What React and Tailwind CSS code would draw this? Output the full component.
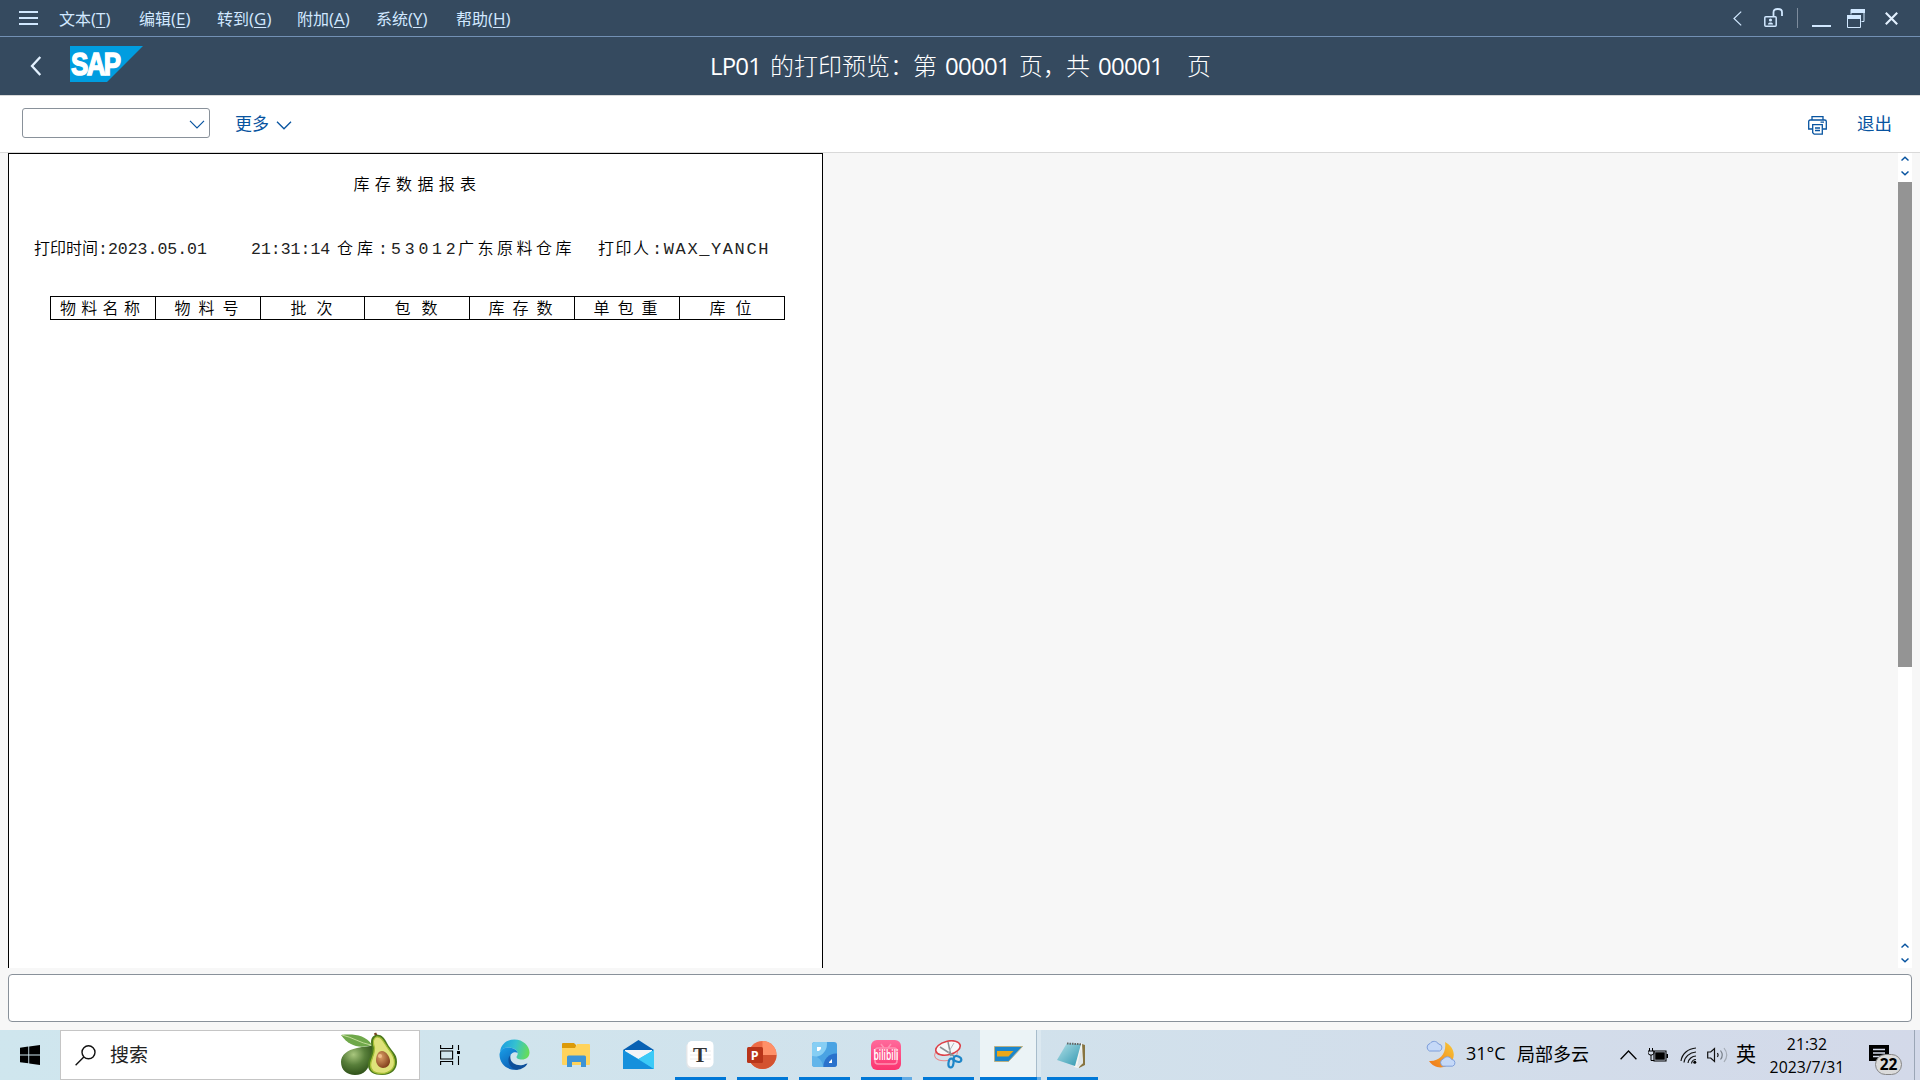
import React from "react";

const MENU = [
  ["文本", "T", "w-[80px]"],
  ["编辑", "E", "w-[78px]"],
  ["转到", "G", "w-[80px]"],
  ["附加", "A", "w-[79px]"],
  ["系统", "Y", "w-[80px]"],
  ["帮助", "H", "w-[80px]"],
];

const COLUMNS = [
  ["物料名称", "w-[105px] pl-[9px] tracking-[5.3px]"],
  ["物料号", "w-[105px] pl-[18.5px] tracking-[8px]"],
  ["批次", "w-[104px] pl-[29.5px] tracking-[10px]"],
  ["包数", "w-[105px] pl-[29.5px] tracking-[11px]"],
  ["库存数", "w-[105px] pl-[18.5px] tracking-[8px]"],
  ["单包重", "w-[105px] pl-[18.5px] tracking-[8px]"],
  ["库位", "w-[105px] pl-[29.5px] tracking-[10px]"],
];

const CJK = "font-['Noto_Sans_CJK_SC',sans-serif]";
const UI = "font-['Open_Sans','Noto_Sans_CJK_SC',sans-serif]";
const MONO = "font-['Liberation_Mono','Noto_Sans_CJK_SC',monospace]";

function MenuBar() {
  return (
    <div className="flex h-[37px] shrink-0 items-center border-b border-[#7290b4] text-[#d1e8ff]">
      <svg className="ml-[19px] shrink-0" width="19" height="14" viewBox="0 0 19 14" fill="currentColor">
        <rect y="0" width="19" height="2" />
        <rect y="6" width="19" height="2" />
        <rect y="12" width="19" height="2" />
      </svg>
      <div className="ml-[21px] flex text-[16px] leading-[20px]">
        {MENU.map(([name, key, w]) => (
          <span key={key} className={`${w} whitespace-nowrap pt-[1px]`}>
            {name}<span className="text-[17px]">(<span className="underline underline-offset-2">{key}</span>)</span>
          </span>
        ))}
      </div>
      <div className="ml-auto flex items-center">
        <svg width="9" height="15" viewBox="0 0 9 15" fill="none" stroke="currentColor" strokeWidth="1.2">
          <path d="M8.2.6 1 7.5l7.2 6.9" />
        </svg>
        <svg className="ml-[22px]" width="20" height="20" viewBox="0 0 20 20" fill="none" stroke="currentColor">
          <rect x=".8" y="8.8" width="11.4" height="9.4" rx="1" strokeWidth="1.5" />
          <path d="M9.5 8V4.2C9.5 2 11 1 13.7 1S18 2 18 4.2V8" strokeWidth="1.8" />
          <circle cx="6.5" cy="12" r="1.6" fill="currentColor" stroke="none" />
          <path d="M4 16.4c0-1.500 1-2 2.500-2s2.500.5 2.500 2z" fill="currentColor" stroke="none" />
        </svg>
        <div className="ml-[13px] h-5 w-px bg-[#7d8c9d]" />
        <div className="ml-[14px] mt-[16px] h-[2px] w-[19px] bg-[#d1e8ff]" />
        <svg className="ml-4" width="18" height="19" viewBox="0 0 18 19" fill="none" stroke="currentColor">
          <path d="M4 5.500V.5h13v12h-2.500" strokeWidth="1" />
          <path d="M4 0h14v4H4zM0 6h14v4H0z" fill="currentColor" stroke="none" />
          <path d="M.5 7v11.500h13V7" strokeWidth="1" />
        </svg>
        <svg className="ml-5 mr-[22px]" width="13" height="13" viewBox="0 0 13 13" fill="none" stroke="#e3f1ff" strokeWidth="2.1">
          <path d="M.8.8l11.400 11.400M12.200.8.800 12.200" />
        </svg>
      </div>
    </div>
  );
}

function TitleBar() {
  return (
    <div className="flex h-[58px] shrink-0 items-center text-white">
      <svg className="ml-[30px] shrink-0" width="12" height="20" viewBox="0 0 12 20" fill="none" stroke="#e3f1ff" strokeWidth="2.300">
        <path d="M10.300 1 2 10l8.300 9" />
      </svg>
      <svg className="-mt-[4px] ml-[28px] shrink-0" width="73" height="36" viewBox="0 0 73 36">
        <path d="M0 0h73L37 36H0z" fill="#009de0" />
        <text x="1" y="28.500" textLength="48.500" lengthAdjust="spacingAndGlyphs" fontFamily="Liberation Sans" fontWeight="700" fontSize="32" letterSpacing="-2" fill="#fff" stroke="#fff" strokeWidth="1.500">SAP</text>
      </svg>
      <div className="-mt-px ml-[567px] flex whitespace-pre text-[24px] font-light leading-[30px]">
        <span className="w-[60px] font-normal tracking-[-0.800px]">LP01</span>
        <span className="w-[143px]">的打印预览：</span>
        <span className="w-[32px]">第</span>
        <span className="w-[74px] font-normal tracking-[-0.700px]">00001</span>
        <span className="w-[47px]">页，</span>
        <span className="w-[32px]">共</span>
        <span className="w-[89px] font-normal tracking-[-0.700px]">00001</span>
        <span>页</span>
      </div>
    </div>
  );
}

function Toolbar() {
  return (
    <div className="flex h-[58px] shrink-0 items-center border-y border-[#d9d9d9] bg-white text-[#0854a0]">
      <div className="-mt-[2px] ml-[22px] flex h-[30px] w-[188px] shrink-0 items-center justify-end rounded-[3px] border border-[#89919a] bg-white pr-[4px]">
        <svg className="mt-[2px]" width="16" height="9" viewBox="0 0 16 9" fill="none" stroke="currentColor" strokeWidth="1.200">
          <path d="M1 .8l7 7 7-7" />
        </svg>
      </div>
      <span className={`${CJK} -mt-[3px] ml-[25px] w-[41px] text-[17px]`}>更多</span>
      <svg width="16" height="9" viewBox="0 0 16 9" className="mt-[3px]" fill="none" stroke="currentColor" strokeWidth="1.300">
        <path d="M1 .8l7 7 7-7" />
      </svg>
      <svg className="ml-auto mt-[2px]" width="19" height="19" viewBox="0 0 19 19" fill="none" stroke="currentColor" strokeWidth="1.300">
        <path d="M4 4V.7h11V4M4 13H.7V5.500Q.7 4 2.200 4h14.600q1.500 0 1.500 1.500V13H15" />
        <path d="M4.700 8.700h9.600v9.500H6.200l-1.500-1.500zM7 12h5M7 14.500h5M12.500 6.200h3.500" />
      </svg>
      <span className={`${CJK} -mt-px ml-[30px] mr-[28px] text-[17.500px]`}>退出</span>
    </div>
  );
}

function Arrows() {
  return (
    <svg className="mx-auto block" width="8" height="20" viewBox="0 0 8 20" fill="none" stroke="#0854a0" strokeWidth="1.500">
      <path d="M.5 4.500 4 1.200l3.500 3.300M.5 15.500 4 18.800l3.500-3.300" />
    </svg>
  );
}

function Report() {
  return (
    <div className={`${MONO} ml-2 h-[815px] w-[815px] border-x border-t border-black bg-white text-[16px] font-[350] text-black`}>
      <div className="mt-[20px] pl-[344.5px] leading-[24px] tracking-[5.300px]">库存数据报表</div>
      <div className="mt-[40px] flex whitespace-pre pl-[25px] leading-[24px]">
        <span className="w-[64px]">打印时间</span>
        <span className="w-[153px] text-[16.500px] font-normal text-[#222]">:2023.05.01</span>
        <span className="w-[86px] text-[16.500px] font-normal text-[#222]">21:31:14</span>
        <span className="w-[41px] tracking-[4px]">仓库</span>
        <span className="w-[13px] text-[16.500px] font-normal text-[#222]">:</span>
        <span className="w-[67px] text-[16.500px] font-normal tracking-[3.800px] text-[#222]">53012</span>
        <span className="w-[140px] tracking-[3.500px]">广东原料仓库</span>
        <span className="w-[54px] tracking-[1.500px]">打印人</span>
        <span className="text-[17px] font-normal tracking-[1.600px] text-[#222]">:WAX_YANCH</span>
      </div>
      <div className="ml-[41px] mt-[34px] flex h-[24px] w-[735px] border-l border-black">
        {COLUMNS.map(([label, cls]) => (
          <div key={label} className={`${cls} shrink-0 whitespace-nowrap border-y border-r border-black leading-[26px]`}>
            {label}
          </div>
        ))}
      </div>
    </div>
  );
}

function Avocado() {
  return (
    <svg width="58" height="44" viewBox="0 0 58 44">
      <defs>
        <radialGradient id="skin" cx=".38" cy=".32" r=".7">
          <stop offset="0" stopColor="#a9c77e" />
          <stop offset=".5" stopColor="#587f3a" />
          <stop offset="1" stopColor="#2d4f18" />
        </radialGradient>
        <radialGradient id="seed" cx=".35" cy=".35" r=".7">
          <stop offset="0" stopColor="#dda067" />
          <stop offset="1" stopColor="#82401c" />
        </radialGradient>
      </defs>
      <path d="M34 13c-5 2-10 1-17 3C7 18 1 23 1 30c0 8 6 13 14 13 9 0 14-6 15-14 1-6 4-9 4-16z" fill="url(#skin)" />
      <path d="M1 3c11-1 24-1 31 10C19 17 9 14 1 3z" fill="#6fa84a" />
      <path d="M2 3c10 2 18 8 29 10" stroke="#c2dc98" fill="none" />
      <path d="M35 1l2 4" stroke="#7a4422" strokeWidth="2.500" />
      <path d="M36 3c-5 1-6 6-4 13 0 8-4 11-4 17 0 7 6 10 14 10 10 0 15-6 15-13 0-9-6-11-10-19-3-6-6-9-11-8z" fill="#4d7a1d" />
      <path d="M36.500 5c-3 1-4 5-2 11 0 8-4 12-4 17 0 6 5 8.500 11 8.500 8 0 13-5 13-11 0-8-5-11-9-18-3-5-5-8-9-7.500z" fill="#dfe27a" stroke="#a5bf36" strokeWidth="1.300" />
      <path d="M42 19c-4 0-6 5-6 9s3 8 7 8 7-3 7-7-4-10-8-10z" fill="url(#seed)" />
      <circle cx="40" cy="24" r="2" fill="#efbd8b" />
    </svg>
  );
}

function EdgeIcon() {
  return (
    <svg width="31" height="31" viewBox="0 0 31 31">
      <defs>
        <linearGradient id="edgeTop" x1="0" x2="1" y1=".3" y2=".5">
          <stop offset="0" stopColor="#1b9de2" />
          <stop offset=".5" stopColor="#35c1d0" />
          <stop offset="1" stopColor="#66dd58" />
        </linearGradient>
        <linearGradient id="edgeSide" x1="0" x2=".6" y1="0" y2="1">
          <stop offset="0" stopColor="#1aa0e8" />
          <stop offset="1" stopColor="#0b5fb5" />
        </linearGradient>
      </defs>
      <path d="M1 13C2 5 8 .5 15.500.5 24 .5 30.500 7 30.500 13.500c0 4.500-3.500 7-7.500 7-4 0-5.500-1.500-5.500-2.500 0-.8 1.200-1.500 1.200-3.800C18.700 10.500 13 8 8 8.500c-3 .4-5.500 2-7 4.500z" fill="url(#edgeTop)" />
      <path d="M.5 15.500C1 11 4.500 8.500 9 8.500c5 0 9.500 2.500 9.700 5.500-2-1.500-8-1-8 6 0 6 5 10 9 10.400C10 32.500.500 26 .5 15.500z" fill="url(#edgeSide)" />
      <path d="M11.500 16c-1.500 8 6 11 12 10 2-.4 4-1.700 5-1.500C26.500 28.500 21 31.500 16 30.400 9.500 28 7.500 19.500 11.500 16z" fill="#0d4f9a" />
    </svg>
  );
}

function FolderIcon() {
  return (
    <svg width="28" height="24" viewBox="0 0 28 24">
      <path d="M0 1q0-1 1-1h11l2 2v4H0z" fill="#dc9a08" />
      <path d="M0 5h13l2-4h12q1 0 1 1v19q0 1-1 1H1q-1 0-1-1z" fill="#ffd35c" />
      <path d="M5 24V14q0-1.500 1.500-1.500h16Q24 12.500 24 14v10h-5v-5h-9v5z" fill="#3d94d6" />
    </svg>
  );
}

function MailIcon() {
  return (
    <svg width="31" height="29" viewBox="0 0 31 29">
      <path d="M0 10 15.500 0 31 10v8H0z" fill="#0861b3" />
      <path d="M2 10h27v9H2z" fill="#f3f5f7" />
      <path d="M0 10l15.500 9L31 10v19H0z" fill="#2eb8ee" />
      <path d="M0 10l31 19H0z" fill="#1590dc" />
      <path d="M15.500 19 31 10v19z" fill="#3ccaf7" />
    </svg>
  );
}

function TyporaIcon() {
  return (
    <svg width="28" height="28" viewBox="0 0 28 28">
      <rect x="0" y="1.500" width="26" height="26" rx="5" fill="#e4e6e8" transform="rotate(-3 13 14)" />
      <rect x="1.500" y="0" width="26" height="26" rx="4.500" fill="#fff" />
      <path d="M4 10h21M4 14h21M4 18h21" stroke="#ececec" />
      <text x="14" y="20.500" textAnchor="middle" fontFamily="Liberation Serif" fontWeight="700" fontSize="21" fill="#333">T</text>
    </svg>
  );
}

function PowerPointIcon() {
  return (
    <svg width="30" height="28" viewBox="0 0 30 28">
      <circle cx="15.500" cy="14" r="14" fill="#ed6c47" />
      <path d="M15.500 0a14 14 0 0 1 14 14h-14z" fill="#ff9068" />
      <path d="M1.500 14h28a14 14 0 0 1-28 0z" fill="#d35230" />
      <rect x="0" y="6" width="16" height="16" rx="1.500" fill="#b83419" />
      <text x="7.800" y="18.500" textAnchor="middle" fontFamily="Open Sans" fontWeight="700" fontSize="12.500" fill="#fff">P</text>
    </svg>
  );
}

function BlueTileIcon() {
  return (
    <svg width="25" height="25" viewBox="0 0 25 25">
      <defs>
        <clipPath id="tile"><rect width="25" height="25" rx="3" /></clipPath>
      </defs>
      <g clipPath="url(#tile)">
        <rect width="25" height="25" fill="#4aa3e3" />
        <circle cx="2" cy="2" r="13" fill="#86cef4" />
        <circle cx="0" cy="25" r="11" fill="#62b5ea" />
        <circle cx="24" cy="24" r="12.500" fill="#2a72cc" />
        <path d="M5 5h4v2L7 9H5zM17 20l3-3v4h-3z" fill="#fff" />
      </g>
    </svg>
  );
}

function BilibiliIcon() {
  return (
    <svg className="overflow-visible" width="30" height="30" viewBox="0 0 30 30">
      <defs>
        <linearGradient id="bili" x1="0" x2="0" y1="0" y2="1">
          <stop offset="0" stopColor="#ff6a9b" />
          <stop offset="1" stopColor="#fb3470" />
        </linearGradient>
      </defs>
      <rect width="30" height="30" rx="6" fill="url(#bili)" />
      <path d="M10 4l3 4M20 4l-3 4M7 8h16q3 0 3 3v10q0 3-3 3H7q-3 0-3-3V11q0-3 3-3z" fill="none" stroke="#ff91b3" strokeWidth="1.500" />
      <text transform="translate(2.500 20.300) scale(1 1.600)" textLength="25" lengthAdjust="spacingAndGlyphs" fontFamily="Open Sans" fontWeight="600" fontSize="8.500" fill="#fff">bilibili</text>
    </svg>
  );
}

function SnipIcon() {
  return (
    <svg width="29" height="29" viewBox="0 0 29 29" fill="none">
      <ellipse cx="12" cy="14" rx="11.500" ry="6.500" stroke="#e88a8e" transform="rotate(-10 12 14)" />
      <ellipse cx="14" cy="8" rx="12.500" ry="6.800" fill="#f6f7f8" stroke="#dc4148" strokeWidth="1.600" transform="rotate(-14 14 8)" />
      <path d="M14 2l3 14M6 7l14 9" stroke="#8a9095" strokeWidth="1.500" />
      <path d="M20 3l-6 10" stroke="#b4b9bd" />
      <ellipse cx="17" cy="23" rx="2.500" ry="4.500" stroke="#1e86c8" strokeWidth="2.200" transform="rotate(8 17 23)" />
      <ellipse cx="23.500" cy="19" rx="4" ry="2.800" stroke="#1e86c8" strokeWidth="2.200" transform="rotate(22 23.500 19)" />
    </svg>
  );
}

function SapGuiIcon() {
  return (
    <svg width="29" height="16" viewBox="0 0 29 16">
      <path d="M.5.500h28L14.500 15.500H.5z" fill="#1b86cc" stroke="#b9b083" />
      <path d="M3 5h16.500l-5 5.500H3z" fill="#eaa71a" />
    </svg>
  );
}

function NotepadIcon() {
  return (
    <svg width="29" height="26" viewBox="0 0 29 26">
      <defs>
        <linearGradient id="note" x1="0" x2="1" y1="0" y2="1">
          <stop offset="0" stopColor="#b4e1e8" />
          <stop offset="1" stopColor="#2f97b0" />
        </linearGradient>
      </defs>
      <path d="M25 2l3 1v20l-6 3z" fill="#877440" />
      <path d="M10 2l15-1 1 20-5 5-4-1z" fill="#f4f4f0" />
      <path d="M10 1l14 1-6 22-18-6z" fill="url(#note)" />
      <path d="M24 5l2 16-6 4z" fill="#dfe6e9" />
      <path d="M10 1.500l15 .8" stroke="#666" strokeDasharray="1.500 1" strokeWidth="2" />
    </svg>
  );
}

const APPS = [
  [EdgeIcon, "w-[62px]", "", ""],
  [FolderIcon, "w-[62px]", "", ""],
  [MailIcon, "w-[62px]", "", ""],
  [TyporaIcon, "w-[62px]", "w-[51px]", ""],
  [PowerPointIcon, "w-[62px]", "w-[51px]", ""],
  [BlueTileIcon, "w-[62px]", "w-[51px]", ""],
  [BilibiliIcon, "w-[62px]", "w-[41px]", "w-[10px]"],
  [SnipIcon, "w-[62px]", "w-[51px]", ""],
];

function Taskbar() {
  return (
    <div className="flex h-[50px] shrink-0 items-center bg-linear-to-r from-[#cfe6ee] via-[#d1e2ec] to-[#d3d9e9] text-black">
      <svg className="ml-5 shrink-0" width="20" height="20" viewBox="0 0 20 20">
        <path d="M0 2.800 8.300 1.600V9.500H0zM9.200 1.500 20 0v9.500H9.200zM0 10.400h8.300v7.900L0 17.200zM9.200 10.400H20V20L9.200 18.500z" />
      </svg>
      <div className="ml-5 flex h-full w-[360px] shrink-0 items-center border border-[#c5c5c5] bg-white">
        <svg className="ml-[14px]" width="21" height="21" viewBox="0 0 21 21" fill="none" stroke="#111" strokeWidth="1.400">
          <circle cx="13.500" cy="7.300" r="6.500" />
          <path d="M8.800 12 .6 20.200" />
        </svg>
        <span className={`${CJK} -mt-[2px] ml-[14px] text-[19px] text-[#222]`}>搜索</span>
        <div className="-mt-[2px] ml-auto mr-[21px]"><Avocado /></div>
      </div>
      <svg className="ml-5 shrink-0" width="20" height="20" viewBox="0 0 20 20" fill="none" stroke="#000" strokeWidth="1.100">
        <path d="M.6 0v3.500h12V0M.6 6h12v8H.6zM.6 20v-3.500h12V20M18.500 0v5M18.500 11v9" />
        <path d="M17 6h3v3h-3z" fill="#000" stroke="none" />
      </svg>
      <div className="ml-[23px] flex h-full shrink-0">
        {APPS.map(([Icon, w, bar, tail], i) => (
          <div key={i} className={`${w} flex h-full flex-col items-center`}>
            <div className="flex h-[47px] items-center pt-[2px]"><Icon /></div>
            <div className="flex h-[3px]">
              <div className={`${bar} bg-[#0078d7]`} />
              <div className={`${tail} bg-[#62abe4]`} />
            </div>
          </div>
        ))}
        <div className="ml-px flex h-full w-[61px] flex-col">
          <div className="flex h-[47px]">
            <div className="flex w-[57px] items-center justify-center border-r border-[#a7bccb] bg-[#ebf3f6] pl-px pt-px"><SapGuiIcon /></div>
            <div className="w-1 bg-[#dbe8f0]" />
          </div>
          <div className="flex h-[3px]">
            <div className="w-[57px] bg-[#0078d7]" />
            <div className="w-1 bg-[#62abe4]" />
          </div>
        </div>
        <div className="ml-[6px] flex h-full w-[51px] flex-col items-center">
          <div className="flex h-[47px] items-center pr-[3px] pt-[2px]"><NotepadIcon /></div>
          <div className="h-[3px] w-full bg-[#0078d7]" />
        </div>
      </div>
      <Tray />
    </div>
  );
}

function Cloud({ x, y, s }) {
  return (
    <path
      transform={`translate(${x} ${y}) scale(${s})`}
      d="M4 11a4 4 0 0 1 .5-7.500A5 5 0 0 1 13 4a3.600 3.600 0 0 1 1 7z"
      fill="#c5d9f8"
      stroke="#7d9edb"
      strokeWidth="1"
    />
  );
}

function Tray() {
  return (
    <div className="ml-auto flex h-full items-center">
      <svg className="-mt-[2px]" width="31" height="28" viewBox="0 0 31 28">
        <defs>
          <linearGradient id="moon" x1="1" x2="0" y1="0" y2="1">
            <stop offset="0" stopColor="#f8ca38" />
            <stop offset="1" stopColor="#ef7419" />
          </linearGradient>
        </defs>
        <path d="M19 2c8 4 11 12 7 19-5 8-17 9-23 0 10 1 18-7 16-19z" fill="url(#moon)" />
        <Cloud x={-0.5} y={0} s={1} />
        <Cloud x={13} y={15.500} s={0.970} />
      </svg>
      <span className="-mt-[3px] ml-[9px] w-[51px] whitespace-nowrap text-[18px]">31°C</span>
      <span className={`${CJK} -mt-[3px] w-[73px] whitespace-nowrap text-[18px]`}>局部多云</span>
      <svg className="ml-[30px]" width="17" height="10" viewBox="0 0 17 10" fill="none" stroke="#000" strokeWidth="1.300">
        <path d="M.6 9.200 8.500 1l7.900 8.200" />
      </svg>
      <svg className="ml-[11px]" width="20" height="14" viewBox="0 0 20 14">
        <path d="M1.500 0v3M4.500 0v3M0 3h6v2.500L4 7H2L0 5.500zM3 7v5.500h3" fill="none" stroke="#000" />
        <path d="M6 3h12v10H6z" fill="none" stroke="#000" strokeWidth="1.100" />
        <path d="M7.200 4.300h9.600v7.400H7.200zM18.500 6H20v4h-1.500z" />
      </svg>
      <svg className="ml-[12px]" width="17" height="17" viewBox="0 0 17 17" fill="none" stroke="#111" strokeWidth="1.200">
        <path d="M1 14C2 7 8 1.500 16 1M4 15.500C4.500 10 9.500 5.500 16 5M8 16c.5-4 4-7 8-7M11.500 16.500c.3-2 2-4 4.500-4" />
        <circle cx="14.800" cy="15.300" r="1.500" fill="#000" stroke="none" />
      </svg>
      <svg className="ml-[10px]" width="21" height="18" viewBox="0 0 21 18" fill="none" stroke="#111" strokeWidth="1.200">
        <path d="M.7 6h3L7.500 2.500v13L3.700 12h-3z" />
        <path d="M10.500 7q1.300 2 0 4" />
        <path d="M13.500 4.500q3.500 4.500 0 9" stroke="#777f88" />
        <path d="M17 2q5.500 7 0 14" stroke="#a4abb5" />
      </svg>
      <span className={`${CJK} -mt-[3px] ml-2 w-[20px] text-[20px]`}>英</span>
      <div className="ml-[11px] mt-px flex w-[80px] flex-col items-center text-[15.800px] leading-[23px]">
        <span>21:32</span>
        <span>2023/7/31</span>
      </div>
      <div className="relative ml-[22px] h-[34px] w-[45px]">
        <svg className="mt-[7px]" width="20" height="20" viewBox="0 0 20 20">
          <path d="M0 0h20v16h-7l-3 4v-4H0z" />
          <path d="M4 4.500h12M4 8h12M4 11.500h8" stroke="#d3d9e9" strokeWidth="1.400" />
        </svg>
        <span className="absolute left-[6px] top-[16px] flex h-[21px] w-[27px] items-center justify-center rounded-full border border-[#858585] bg-[#dbdbdb] text-[15.500px] font-bold leading-none">22</span>
      </div>
      <div className="h-full w-px bg-[#9ba6b6]" />
      <div className="w-[5px]" />
    </div>
  );
}

export default function App() {
  return (
    <div className={`${UI} flex h-[1080px] w-[1920px] flex-col overflow-hidden bg-[#f7f7f7]`}>
      <div className="flex h-[95px] shrink-0 flex-col bg-[#354a5f]">
        <MenuBar />
        <TitleBar />
      </div>
      <Toolbar />
      <div className="flex h-[815px] shrink-0 justify-between">
        <Report />
        <div className="mr-2 flex w-[14px] flex-col bg-white">
          <div className="h-[29px] pt-[3px]"><Arrows /></div>
          <div className="h-[485px] bg-[#949494]" />
          <div className="mt-auto pb-[5px]"><Arrows /></div>
        </div>
      </div>
      <div className="mx-2 mt-[6px] h-[48px] shrink-0 rounded-[4px] border border-[#89919a] bg-white" />
      <div className="mt-auto"><Taskbar /></div>
    </div>
  );
}
